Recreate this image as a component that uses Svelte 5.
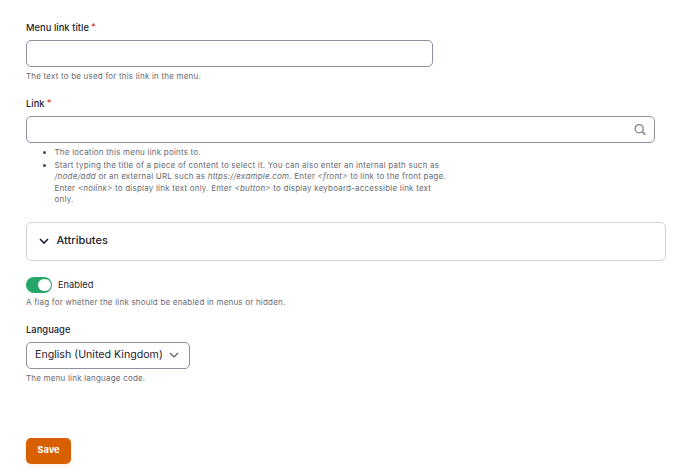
<script>
    let title = '';
    let link = '';
    let enabled = true;
    let language = 'en-gb';
</script>

<form class="menu-form" on:submit|preventDefault>
    <div class="form-item">
        <label for="title">Menu link title<span class="required">*</span></label>
        <input id="title" class="text-input title-input" type="text" bind:value={title} />
        <p class="description">The text to be used for this link in the menu.</p>
    </div>

    <div class="form-item link-item">
        <label for="link">Link<span class="required">*</span></label>
        <div class="text-input autocomplete">
            <input id="link" type="text" bind:value={link} />
            <svg width="12" height="12" viewBox="0 0 12 12" fill="none" stroke="#828282">
                <circle cx="5.2" cy="4.7" r="4.1" stroke-width="1.3" />
                <path d="M8.1 7.5L11.3 10.7" stroke-width="1.6" />
            </svg>
        </div>
        <ul class="description">
            <li>The location this menu link points to.</li>
            <li>Start typing the title of a piece of content to select it. You can also enter an internal path such as <em>/node/add</em> or an external URL such as <em>https://example.com</em>. Enter <em>&lt;front&gt;</em> to link to the front page. Enter <em>&lt;nolink&gt;</em> to display link text only. Enter <em>&lt;button&gt;</em> to display keyboard-accessible link text only.</li>
        </ul>
    </div>

    <details class="attributes">
        <summary>
            <svg width="10" height="7" viewBox="0 0 10 7" fill="none" stroke="#232435" stroke-width="1.6">
                <path d="M1 1L5 5L9 1" />
            </svg>
            <span>Attributes</span>
        </summary>
    </details>

    <div class="form-item enabled-item">
        <label class="toggle">
            <input type="checkbox" bind:checked={enabled} />
            <span class="track"><span class="knob"></span></span>
            Enabled
        </label>
        <p class="description">A flag for whether the link should be enabled in menus or hidden.</p>
    </div>

    <div class="form-item language-item">
        <label for="language">Language</label>
        <div class="select">
            <select id="language" bind:value={language}>
                <option value="en-gb">English (United Kingdom)</option>
            </select>
            <svg width="10" height="7" viewBox="0 0 10 7" fill="none" stroke="#55565b" stroke-width="1.1">
                <path d="M1 1L5 5L9 1" />
            </svg>
        </div>
        <p class="description">The menu link language code.</p>
    </div>

    <button class="save" type="submit">Save</button>
</form>

<style>
    :global(body) {
        background: white;
    }

    .menu-form {
        box-sizing: border-box;
        width: 697px;
        height: 475px;
        padding: 21px 31px 0 26px;
        overflow: hidden;
        color: #232431;
        font-family: Inter, sans-serif;
    }

    .form-item > label {
        display: block;
        height: 14px;
        font-size: 9.3px;
        font-weight: 500;
        line-height: 14px;
        letter-spacing: 0.06px;
    }

    .required {
        position: relative;
        top: -1px;
        margin-left: 2px;
        color: #d53f3f;
    }

    input,
    select {
        padding: 0;
        border: 0;
        outline: 0;
        color: inherit;
        background: transparent;
        font-family: inherit;
    }

    .text-input {
        display: block;
        box-sizing: border-box;
        height: 27px;
        margin-top: 5px;
        border: 1px solid #8e8f9f;
        border-radius: 5px;
    }

    .title-input {
        width: 407px;
    }

    .autocomplete {
        display: flex;
        align-items: center;
        width: 629px;
        padding: 0 8px;
    }

    .autocomplete input {
        flex: 1;
    }

    .description {
        margin: 4px 0 0;
        color: #6a6b72;
        font-size: 8px;
        line-height: 11px;
        letter-spacing: 0.2px;
    }

    .link-item {
        margin-top: 15px;
    }

    ul.description {
        width: 394px;
        padding-left: 28.5px;
        line-height: 11.3px;
        letter-spacing: 0.21px;
    }

    li::marker {
        color: #43444c;
    }

    li + li {
        margin-top: 1.9px;
    }

    .attributes {
        box-sizing: border-box;
        height: 39px;
        margin-top: 16.6px;
        border: 1px solid #d4d4d8;
        border-radius: 5px;
    }

    summary {
        display: flex;
        align-items: center;
        gap: 7.5px;
        padding: 8px 12px;
        font-size: 11px;
        font-weight: 500;
        line-height: 18px;
        list-style: none;
    }

    summary svg {
        margin-top: 3px;
    }

    .enabled-item {
        margin-top: 16px;
    }

    .form-item > .toggle {
        display: flex;
        align-items: center;
        gap: 6px;
        height: 16px;
        font-weight: 400;
        letter-spacing: 0;
    }

    .toggle input {
        display: none;
    }

    .track {
        display: flex;
        align-items: center;
        box-sizing: border-box;
        width: 26px;
        height: 16px;
        padding: 0 1.5px;
        border-radius: 8px;
        background: #8e929c;
    }

    .toggle input:checked + .track {
        justify-content: flex-end;
        background: #26a769;
    }

    .knob {
        width: 12.5px;
        height: 12.5px;
        border-radius: 50%;
        background: white;
    }

    .language-item {
        margin-top: 15px;
    }

    .select {
        display: flex;
        align-items: center;
        box-sizing: border-box;
        width: 164px;
        height: 27px;
        margin-top: 5px;
        padding: 0 10px 0 8px;
        border: 1px solid #8e8f9f;
        border-radius: 5px;
    }

    select {
        flex: 1;
        height: 18px;
        margin-bottom: 2px;
        appearance: none;
        font-size: 10.65px;
    }

    .save {
        width: 45px;
        height: 26px;
        margin-top: 54px;
        padding: 0 0 3px;
        border: 0;
        border-radius: 5px;
        color: white;
        background: #d86000;
        box-shadow: 0 2px 4px rgba(216, 96, 0, 0.12);
        font: 700 9.3px Inter, sans-serif;
    }
</style>
